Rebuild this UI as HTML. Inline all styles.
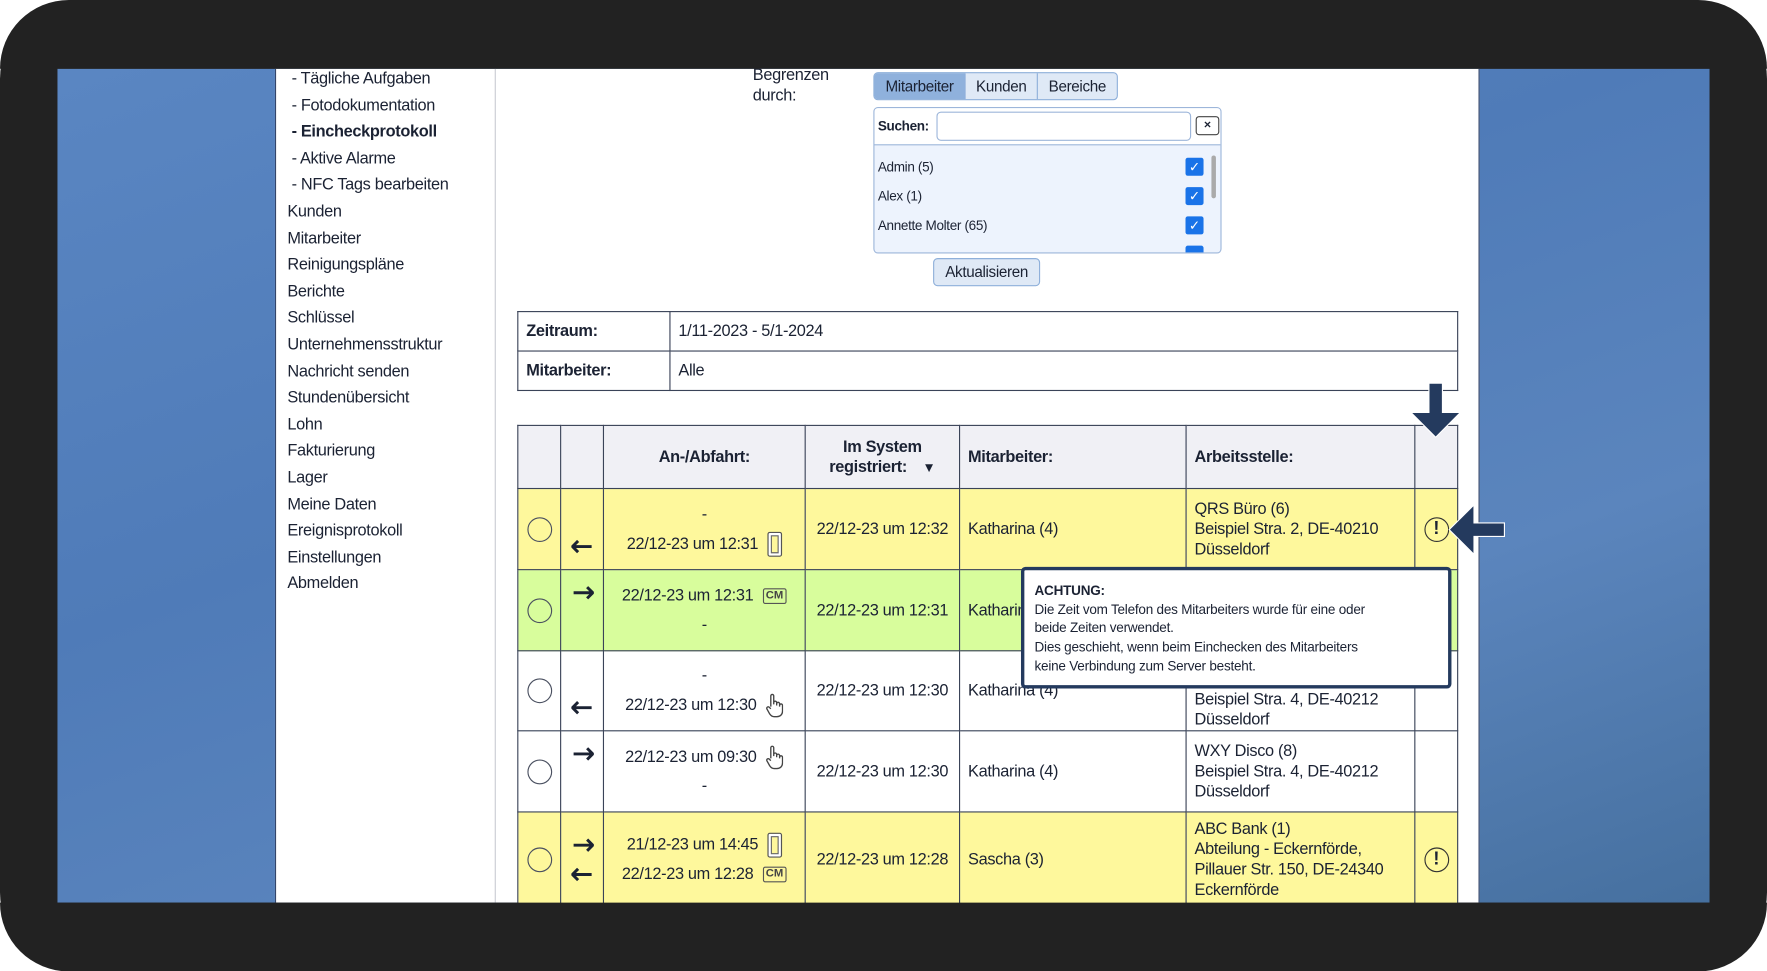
<!DOCTYPE html>
<html><head><meta charset="utf-8"><style>
*{margin:0;padding:0;box-sizing:border-box}
html,body{width:1767px;height:971px;overflow:hidden;background:#fff}
#s{position:absolute;left:0;top:0;width:1568px;height:862px;transform:scale(1.12691);transform-origin:0 0;font-family:"Liberation Sans",Arial,sans-serif;color:#1b2233}
.frame{position:absolute;left:0;top:0;width:1568px;height:862px;background:#222;border-radius:70px}
.scr{position:absolute;left:51px;top:61px;width:1466px;height:740px;overflow:hidden;background:linear-gradient(160deg,#5a86c2 0%,#4f7bb8 40%,#5b85bd 70%,#46709f 100%)}
.page{position:absolute;left:193px;top:0;width:1069px;height:740px;background:#fff;border-left:1px solid #33456a;border-right:1px solid #33456a}
.side{position:absolute;left:0;top:0;width:195px;height:740px;border-right:1px solid #c9ccd4}
.side div{position:absolute;left:10px;font-size:14.5px;letter-spacing:-0.3px;white-space:nowrap;top:1px}
.a{position:absolute;white-space:nowrap}
table{border-collapse:collapse;position:absolute}
td,th{border:1px solid #3a4358;font-size:14.5px;letter-spacing:-0.3px}
.rad{width:22px;height:22px;border:1.6px solid #4a5060;border-radius:50%;margin:auto}
.ic{display:inline-block;vertical-align:middle;margin-left:8px}
.cm{border:1.5px solid #555;border-radius:2px;font-size:10px;padding:0 2px;line-height:12px;font-weight:bold;color:#444;letter-spacing:0}
.ph{width:13px;height:22px;border:1.5px solid #555;border-radius:2px;box-shadow:inset 0 0 0 2px #fff,inset 0 0 0 3px #666}
.excl{width:22px;height:22px;border:1.8px solid #333;border-radius:50%;margin:auto;text-align:center;font-weight:bold;font-size:16px;line-height:19px}
.ar{display:block;margin:auto}
</style></head><body><div id="s">
<div class="frame"></div>
<div class="scr">
<div class="page">
<div class="side">
<div style="margin-top:0">&nbsp;- Tägliche Aufgaben</div>
<div style="top:24.6px">&nbsp;- Fotodokumentation</div>
<div style="top:48.2px;font-weight:bold">&nbsp;- Eincheckprotokoll</div>
<div style="top:71.8px">&nbsp;- Aktive Alarme</div>
<div style="top:95.4px">&nbsp;- NFC Tags bearbeiten</div>
<div style="top:119px">Kunden</div>
<div style="top:142.6px">Mitarbeiter</div>
<div style="top:166.2px">Reinigungspläne</div>
<div style="top:189.8px">Berichte</div>
<div style="top:213.4px">Schlüssel</div>
<div style="top:237px">Unternehmensstruktur</div>
<div style="top:260.6px">Nachricht senden</div>
<div style="top:284.2px">Stundenübersicht</div>
<div style="top:307.8px">Lohn</div>
<div style="top:331.4px">Fakturierung</div>
<div style="top:355px">Lager</div>
<div style="top:378.6px">Meine Daten</div>
<div style="top:402.2px">Ereignisprotokoll</div>
<div style="top:425.8px">Einstellungen</div>
<div style="top:449.4px">Abmelden</div>
</div>
</div>
</div>
<div class="a" style="left:668px;top:58px;font-size:14.5px;letter-spacing:-0.3px;line-height:18px">Begrenzen<br>durch:</div>
<div class="a" style="left:775px;top:64px;width:217px;height:25px;border:1px solid #8fb0da;border-radius:4px;background:#dfe9f6;font-size:13.5px;letter-spacing:-0.3px;display:flex">
<div style="width:81px;background:#8fb1dc;text-align:center;line-height:23px;border-right:1px solid #8fb0da;border-radius:3px 0 0 3px">Mitarbeiter</div>
<div style="width:64px;text-align:center;line-height:23px;border-right:1px solid #8fb0da">Kunden</div>
<div style="flex:1;text-align:center;line-height:23px">Bereiche</div></div>
<div class="a" style="left:775px;top:95px;width:309px;height:130px;border:1px solid #9db6da;border-radius:4px;background:#edf3fd;overflow:hidden">
<div style="height:33px;background:#fff;border-bottom:1px solid #9db6da;position:relative">
<span style="position:absolute;left:3px;top:9px;font-size:12px;font-weight:bold;letter-spacing:-0.3px">Suchen:</span>
<div style="position:absolute;left:55px;top:3px;width:226px;height:26px;border:1px solid #9db6da;border-radius:4px"></div>
<span style="position:absolute;left:285px;top:7px;width:21px;height:17px;border:1.5px solid #444;border-radius:3px;font-size:11px;font-weight:bold;text-align:center;line-height:14px">×</span></div>
<div style="position:absolute;left:3px;top:45px;font-size:12px;letter-spacing:-0.3px">Admin (5)</div>
<div style="position:absolute;left:3px;top:71px;font-size:12px;letter-spacing:-0.3px">Alex (1)</div>
<div style="position:absolute;left:3px;top:97px;font-size:12px;letter-spacing:-0.3px">Annette Molter (65)</div>
<div style="position:absolute;left:276px;top:44px;width:16px;height:16px;background:#1a73e8;border-radius:2px;color:#fff;font-size:12px;text-align:center;line-height:16px">✓</div>
<div style="position:absolute;left:276px;top:70px;width:16px;height:16px;background:#1a73e8;border-radius:2px;color:#fff;font-size:12px;text-align:center;line-height:16px">✓</div>
<div style="position:absolute;left:276px;top:96px;width:16px;height:16px;background:#1a73e8;border-radius:2px;color:#fff;font-size:12px;text-align:center;line-height:16px">✓</div>
<div style="position:absolute;left:276px;top:122px;width:16px;height:16px;background:#1a73e8;border-radius:2px"></div>
<div style="position:absolute;left:299px;top:42px;width:4px;height:38px;background:#aaa;border-radius:2px"></div>
</div>
<div class="a" style="left:828px;top:229px;width:95px;height:25px;border:1px solid #8fb0da;border-radius:4px;background:#dfe9f6;font-size:13.5px;letter-spacing:-0.3px;text-align:center;line-height:23px">Aktualisieren</div>

<table style="left:459px;top:276px;width:835px">
<tr style="height:35px"><td style="width:135px;padding-left:7px;font-weight:bold">Zeitraum:</td><td style="padding-left:7px">1/11-2023 - 5/1-2024</td></tr>
<tr style="height:35px"><td style="padding-left:7px;font-weight:bold">Mitarbeiter:</td><td style="padding-left:7px">Alle</td></tr></table>

<svg width="0" height="0" style="position:absolute"><defs>
<symbol id="L" viewBox="0 0 20 12"><path d="M1 6h17M6 1 1 6l5 5" stroke="#1b2233" stroke-width="2.6" fill="none"/></symbol>
<symbol id="R" viewBox="0 0 20 12"><path d="M2 6h17M14 1l5 5-5 5" stroke="#1b2233" stroke-width="2.6" fill="none"/></symbol>
<symbol id="H" viewBox="0 0 16 22"><path d="M5 12V2.5a1.3 1.3 0 0 1 2.6 0V10m0-1.5a1.3 1.3 0 0 1 2.6 0V11m0-1.5a1.3 1.3 0 0 1 2.6 0V12m0-1a1.3 1.3 0 0 1 2.6 0v5c0 3-2 5-5 5H8c-2 0-3-1-4-2.5L1.5 14a1.3 1.3 0 0 1 2-1.5L5 14" stroke="#444" stroke-width="1.2" fill="#fff"/></symbol>
</defs></svg>

<table style="left:459px;top:377px;width:835px">
<tr style="height:56px;background:#f0f0f5;font-weight:bold"><th style="width:38px"></th><th style="width:38px"></th><th style="width:179px">An-/Abfahrt:</th><th style="width:137px;line-height:18px">Im System<br>registriert: <span style="font-size:12px;margin-left:10px">▼</span></th><th style="width:201px;text-align:left;padding-left:7px">Mitarbeiter:</th><th style="width:203px;text-align:left;padding-left:7px">Arbeitsstelle:</th><th></th></tr>
<tr style="height:72px;background:#fef89c"><td><div class="rad"></div></td><td style="vertical-align:bottom;padding-bottom:14px"><svg class="ar" width="20" height="12"><use href="#L"/></svg></td><td style="text-align:center;line-height:26px">-<br>22/12-23 um 12:31<span class="ic ph"></span></td><td style="text-align:center">22/12-23 um 12:32</td><td style="padding-left:7px">Katharina (4)</td><td style="padding-left:7px;line-height:18px">QRS Büro (6)<br>Beispiel Stra. 2, DE-40210<br>Düsseldorf</td><td><div class="excl">!</div></td></tr>
<tr style="height:72px;background:#d8fd9c"><td><div class="rad"></div></td><td style="vertical-align:top;padding-top:14px"><svg class="ar" width="20" height="12"><use href="#R"/></svg></td><td style="text-align:center;line-height:26px">22/12-23 um 12:31<span class="ic cm">CM</span><br>-</td><td style="text-align:center">22/12-23 um 12:31</td><td style="padding-left:7px">Katharina (4)</td><td></td><td></td></tr>
<tr style="height:71px;background:#fff"><td><div class="rad"></div></td><td style="vertical-align:bottom;padding-bottom:14px"><svg class="ar" width="20" height="12"><use href="#L"/></svg></td><td style="text-align:center;line-height:26px">-<br>22/12-23 um 12:30<svg class="ic" width="16" height="22"><use href="#H"/></svg></td><td style="text-align:center">22/12-23 um 12:30</td><td style="padding-left:7px">Katharina (4)</td><td style="padding-left:7px;line-height:18px;vertical-align:bottom">Beispiel Stra. 4, DE-40212<br>Düsseldorf</td><td></td></tr>
<tr style="height:72px;background:#fff"><td><div class="rad"></div></td><td style="vertical-align:top;padding-top:14px"><svg class="ar" width="20" height="12"><use href="#R"/></svg></td><td style="text-align:center;line-height:26px">22/12-23 um 09:30<svg class="ic" width="16" height="22"><use href="#H"/></svg><br>-</td><td style="text-align:center">22/12-23 um 12:30</td><td style="padding-left:7px">Katharina (4)</td><td style="padding-left:7px;line-height:18px">WXY Disco (8)<br>Beispiel Stra. 4, DE-40212<br>Düsseldorf</td><td></td></tr>
<tr style="height:84px;background:#fef89c"><td><div class="rad"></div></td><td><svg class="ar" width="20" height="12"><use href="#R"/></svg><svg class="ar" style="margin-top:14px" width="20" height="12"><use href="#L"/></svg></td><td style="text-align:center;line-height:26px">21/12-23 um 14:45<span class="ic ph"></span><br>22/12-23 um 12:28<span class="ic cm">CM</span></td><td style="text-align:center">22/12-23 um 12:28</td><td style="padding-left:7px">Sascha (3)</td><td style="padding-left:7px;line-height:18px">ABC Bank (1)<br>Abteilung - Eckernförde,<br>Pillauer Str. 150, DE-24340<br>Eckernförde</td><td><div class="excl">!</div></td></tr>
</table>
<div class="a" style="left:0;top:801px;width:1568px;height:61px;background:#222;border-radius:0 0 70px 70px"></div>
<div class="a" style="left:0;top:0;width:1568px;height:61px;background:#222;border-radius:70px 70px 0 0"></div>

<div class="a" style="left:906px;top:503px;width:382px;height:108px;background:#fff;border:3px solid #243a5e;border-radius:4px;padding:10px 9px;font-size:12px;letter-spacing:-0.2px;line-height:16.7px;white-space:normal"><b>ACHTUNG:</b><br>Die Zeit vom Telefon des Mitarbeiters wurde für eine oder<br>beide Zeiten verwendet.<br>Dies geschieht, wenn beim Einchecken des Mitarbeiters<br>keine Verbindung zum Server besteht.</div>

<svg class="a" style="left:1250px;top:338px" width="48" height="52"><path d="M18 2h12v26h16L24 50 2 28h16z" fill="#243a5e" stroke="#fff" stroke-width="1"/></svg>
<svg class="a" style="left:1284px;top:446px" width="54" height="48"><path d="M2 24 24 2v16h27v12H24v16z" fill="#243a5e" stroke="#fff" stroke-width="1"/></svg>
</div></body></html>
